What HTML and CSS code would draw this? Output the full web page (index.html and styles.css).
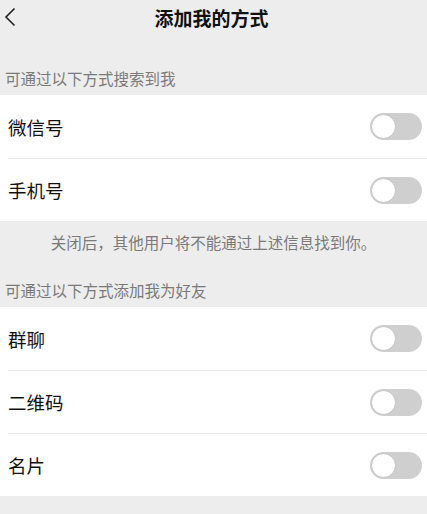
FILE: index.html
```html
<!DOCTYPE html>
<html lang="zh-CN">
<head>
    <meta charset="UTF-8">
    <meta name="viewport" content="width=device-width, initial-scale=1.0">
    <title>添加我的方式</title>
    <link rel="stylesheet" href="styles.css">
</head>
<body>
    <!-- Top bar with back arrow and title -->
    <div class="header">
        <svg class="back" width="12" height="20" viewBox="0 0 12 20">
            <path d="M10.5 1.5 L2 10 L10.5 18.5" fill="none" stroke="#222" stroke-width="1.6"/>
        </svg>
        <div class="title">添加我的方式</div>
    </div>

    <div class="section-title">可通过以下方式搜索到我</div>
    <div class="group">
        <div class="row"><span>微信号</span><span class="switch"></span></div>
        <div class="row"><span>手机号</span><span class="switch"></span></div>
    </div>
    <div class="note">关闭后，其他用户将不能通过上述信息找到你。</div>

    <div class="section-title second">可通过以下方式添加我为好友</div>
    <div class="group">
        <div class="row"><span>群聊</span><span class="switch"></span></div>
        <div class="row"><span>二维码</span><span class="switch"></span></div>
        <div class="row"><span>名片</span><span class="switch"></span></div>
    </div>
</body>
</html>
```

FILE: styles.css
```css
body {
    margin: 0;
    background-color: #ededed;
    font-family: "Noto Sans CJK SC", "Noto Sans", sans-serif;
    color: #111;
}
.header {
    position: relative;
    height: 36px;
    display: flex;
    align-items: center;
    justify-content: center;
}
/* back arrow sits over the left of the bar */
.back {
    position: absolute;
    left: 4px;
    top: 7px;
}
.title {
    font-size: 19px;
    font-weight: bold;
    line-height: 36px;
    margin-left: -4px;
}
.section-title {
    font-size: 15.5px;
    line-height: 22px;
    color: #7a7a7a;
    padding: 31px 5px 6px;
}
.section-title.second {
    padding-top: 16px;
}
.group {
    background-color: #fff;
}
.row {
    height: 63px;
    margin-left: 8px;
    padding-right: 5px;
    display: flex;
    align-items: center;
    justify-content: space-between;
    font-size: 18.5px;
    border-top: 1px solid #e9e9e9;
    box-sizing: border-box;
}
.row:first-child {
    border-top: none;
}
/* off-state toggle */
.switch {
    position: relative;
    width: 52px;
    height: 27px;
    border-radius: 14px;
    background-color: #cfcfcf;
}
.switch::after {
    content: "";
    position: absolute;
    left: 1px;
    top: 1px;
    width: 25px;
    height: 25px;
    border-radius: 50%;
    background-color: #fff;
    box-sizing: border-box;
    border: 1px solid #c4c4c4;
}
.note {
    font-size: 15.5px;
    line-height: 22px;
    color: #7a7a7a;
    text-align: center;
    padding: 10px 0;
}
```
